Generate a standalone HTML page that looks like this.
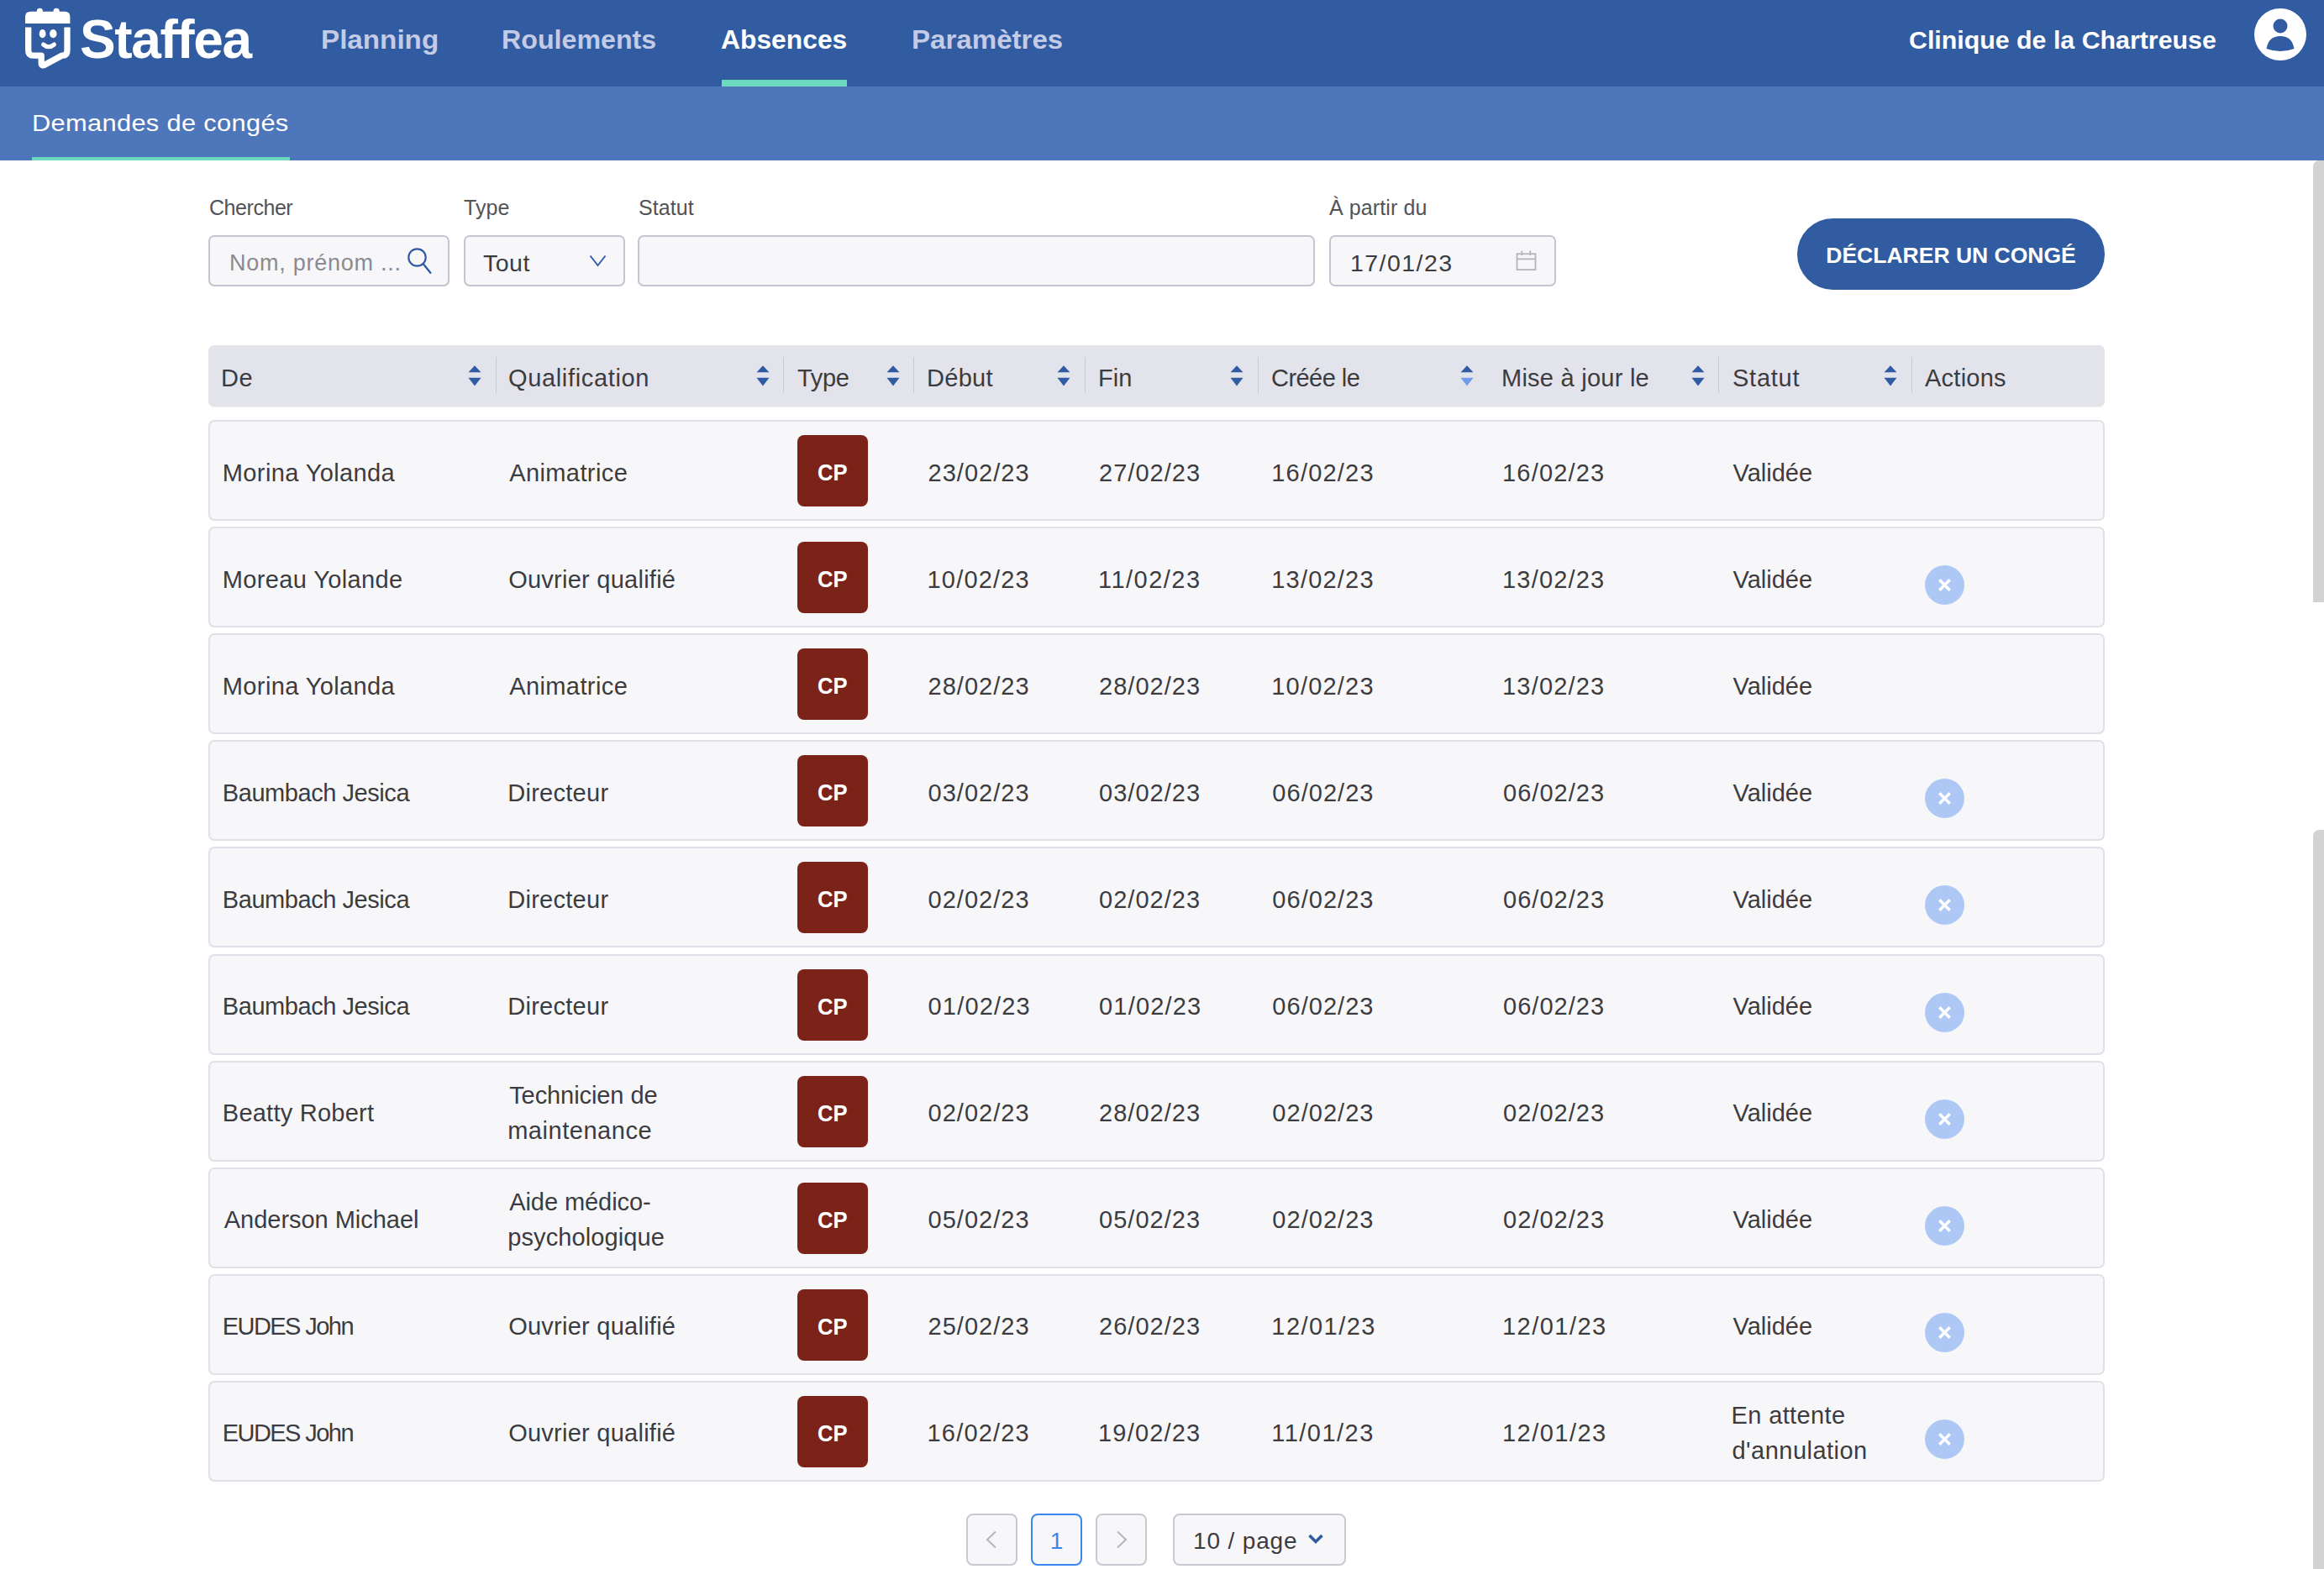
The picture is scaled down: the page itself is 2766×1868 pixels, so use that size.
<!DOCTYPE html>
<html><head><meta charset="utf-8">
<style>
*{box-sizing:border-box;margin:0;padding:0}
html,body{width:2766px;height:1868px;overflow:hidden;background:#fff;font-family:"Liberation Sans",sans-serif;color:#3c3c40}
.abs{position:absolute}
#hdr{position:absolute;left:0;top:0;width:2766px;height:103px;background:#315ca2}
#sub{position:absolute;left:0;top:103px;width:2766px;height:88px;background:#4e77bb}
.nav{position:absolute;top:1px;height:103px;line-height:94px;font-size:31px;font-weight:700;color:#c3cbe6;letter-spacing:1.15px;white-space:nowrap}
.nav.act{color:#fff}
.lbl{position:absolute;font-size:25px;color:#525357;white-space:nowrap;line-height:30px;letter-spacing:0.1px}
.inp{position:absolute;top:280px;height:61px;background:#f7f7fa;border:2px solid #c3c6d0;border-radius:7px}
.th{position:absolute;left:248px;top:411px;width:2257px;height:73px;background:#e2e3eb;border-radius:7px;box-shadow:0 1px 1px rgba(0,0,0,0.06)}
.hl{position:absolute;top:0;height:73px;line-height:73px;font-size:29px;letter-spacing:0.65px;color:#3c3c40;white-space:nowrap;padding-top:3px}
.sort{position:absolute;top:24px;width:16px;height:25px}
.div{position:absolute;top:14px;width:1px;height:43px;background:#c8c9d2}
.row{position:absolute;left:248px;width:2257px;height:120px;background:#f7f7fa;border:2px solid #dfe0e8;border-radius:7px}
.c{position:absolute;top:0;height:116px;display:flex;align-items:center;padding-top:5px;font-size:29px;line-height:42px;letter-spacing:0.3px;white-space:nowrap}
.d{letter-spacing:1.45px}
.cp{position:absolute;left:699px;top:16px;width:84px;height:85px;background:#7b2318;border-radius:8px;color:#fff;font-weight:700;font-size:28.5px;text-align:center;line-height:88px}.cp span{display:inline-block;transform:scaleX(0.9)}
.x{position:absolute;left:2041px;width:47px;height:47px;border-radius:50%;background:#aec8f6}
.pg{position:absolute;top:1802px;height:62px;background:#f7f7fa;border:2px solid #c8c9d1;border-radius:8px}
</style></head><body>
<div id="hdr">
  <svg class="abs" style="left:0;top:0" width="100" height="103" viewBox="0 0 100 103">
        <path d="M30 28 L30 20 Q30 13.7 36.5 13.7 L77 13.7 Q83.4 13.7 83.4 20 L83.4 28 Z" fill="#fff"/>
    <rect x="43.8" y="9.8" width="7.2" height="8" rx="3.6" fill="#fff"/>
    <rect x="63.5" y="9.8" width="7.2" height="8" rx="3.6" fill="#fff"/>
    <path d="M33.7 32.6 L33.7 60 Q33.7 66.2 40 66.2 L49.2 66.2 L49.2 75 Q49.2 79.5 53.5 77 L73.5 66.2 L74.5 66.2 Q80 66.2 80 60 L80 32.6" fill="none" stroke="#fff" stroke-width="7.3" stroke-linejoin="round"/>
    <ellipse cx="50.6" cy="40.2" rx="3.9" ry="5.1" fill="#fff"/>
    <ellipse cx="63.3" cy="40.2" rx="4.2" ry="5.1" fill="#fff"/>
    <path d="M51.5 53 Q58 58.5 64.5 53" fill="none" stroke="#fff" stroke-width="5" stroke-linecap="round"/>
  </svg>
  <div class="abs" style="left:95px;top:1px;height:103px;line-height:92px;font-size:64px;font-weight:700;color:#fff;letter-spacing:-1.4px">Staffea</div>
  <div class="nav" style="left:381.9px;letter-spacing:0;transform:scaleX(1.071);transform-origin:0 0">Planning</div>
  <div class="nav" style="left:597.3px;letter-spacing:0;transform:scaleX(1.038);transform-origin:0 0">Roulements</div>
  <div class="nav act" style="left:857.9px;letter-spacing:0;transform:scaleX(1.026);transform-origin:0 0">Absences</div>
  <div class="abs" style="left:859px;top:95px;width:149px;height:8px;background:#6cdabd"></div>
  <div class="nav" style="left:1084.8px;letter-spacing:0;transform:scaleX(1.067);transform-origin:0 0">Paramètres</div>
  <div class="nav act" style="left:2272px;font-size:29px;letter-spacing:0;transform:scaleX(1.046);transform-origin:0 0">Clinique de la Chartreuse</div>
  <svg class="abs" style="left:2683px;top:10px" width="62" height="62" viewBox="0 0 62 62">
    <circle cx="31" cy="31" r="31" fill="#fff"/>
    <circle cx="31" cy="21" r="8.5" fill="#315ca2"/>
    <path d="M14.5 48 Q17 33 31 33 Q45 33 47.5 48 Q31 54 14.5 48 Z" fill="#315ca2"/>
  </svg>
</div>
<div id="sub">
  <div class="abs" style="left:38px;top:2px;height:84px;line-height:84px;font-size:28px;color:#fff;letter-spacing:0.3px;white-space:nowrap;transform:scaleX(1.1);transform-origin:0 0">Demandes de congés</div>
  <div class="abs" style="left:38px;top:84px;width:307px;height:4px;background:#6cdabd"></div>
</div>
<div class="abs" style="left:2753px;top:191px;width:13px;height:526px;background:#d3d3d3;border-radius:7px 0 0 0"></div>
<div class="abs" style="left:2753px;top:988px;width:13px;height:880px;background:#d3d3d3;border-radius:7px 0 0 0"></div>

<!-- filters -->
<div class="lbl" style="left:249px;top:232px;letter-spacing:-0.45px">Chercher</div>
<div class="lbl" style="left:552px;top:232px">Type</div>
<div class="lbl" style="left:760px;top:232px">Statut</div>
<div class="lbl" style="left:1582px;top:232px">À partir du</div>

<div class="inp" style="left:248px;width:287px"></div>
<div class="abs" style="left:273px;top:295px;line-height:36px;font-size:27px;color:#8a8a90;letter-spacing:0.75px;white-space:nowrap">Nom, prénom ...</div>
<svg class="abs" style="left:480px;top:290px" width="40" height="40" viewBox="0 0 40 40">
  <circle cx="16.5" cy="16.5" r="10.2" fill="none" stroke="#2f5ba3" stroke-width="2.2"/>
  <path d="M23.8 24.2 L32.3 34.8" stroke="#2f5ba3" stroke-width="2.3" stroke-linecap="round"/>
</svg>
<div class="inp" style="left:552px;width:192px"></div>
<div class="abs" style="left:575px;top:295px;line-height:36px;font-size:28.5px;color:#3c3c40;letter-spacing:0.5px">Tout</div>
<svg class="abs" style="left:700px;top:300px" width="24" height="20" viewBox="0 0 24 20">
  <path d="M2.5 4.5 L11.5 16 L20.5 4.5" fill="none" stroke="#2f5ba3" stroke-width="1.9"/>
</svg>
<div class="inp" style="left:759px;width:806px"></div>
<div class="inp" style="left:1582px;width:270px"></div>
<div class="abs d" style="left:1607px;top:295px;line-height:36px;font-size:28.5px;color:#3c3c40">17/01/23</div>
<svg class="abs" style="left:1803px;top:297px" width="27" height="27" viewBox="0 0 27 27">
  <rect x="2.5" y="5.3" width="22" height="18.8" fill="none" stroke="#b4b4bc" stroke-width="1.8"/>
  <path d="M2.5 11.3 H24.5 M8.3 1.5 V7 M18.3 1.5 V7" stroke="#b4b4bc" stroke-width="1.8"/>
</svg>
<div class="abs" style="left:2139px;top:260px;width:366px;height:85px;border-radius:43px;background:#315ca2;color:#fff;font-weight:700;font-size:26.5px;line-height:85px;text-align:center;white-space:nowrap;padding-top:2px">DÉCLARER UN CONGÉ</div>

<!-- table header -->
<div class="th">
  <div class="hl" style="left:15px">De</div>
  <div class="hl" style="left:357px">Qualification</div>
  <div class="hl" style="left:701px;letter-spacing:-0.3px">Type</div>
  <div class="hl" style="left:855px;letter-spacing:0.3px">Début</div>
  <div class="hl" style="left:1059px;letter-spacing:0px">Fin</div>
  <div class="hl" style="left:1265px;letter-spacing:-0.55px">Créée le</div>
  <div class="hl" style="left:1539px;letter-spacing:0.25px">Mise à jour le</div>
  <div class="hl" style="left:1814px;letter-spacing:0.75px">Statut</div>
  <div class="hl" style="left:2043px;letter-spacing:0.25px">Actions</div>
  <div class="div" style="left:342px"></div>
  <div class="div" style="left:684px"></div>
  <div class="div" style="left:839px"></div>
  <div class="div" style="left:1043px"></div>
  <div class="div" style="left:1249px"></div>
  <div class="div" style="left:1797px"></div>
  <div class="div" style="left:2027px"></div>
  <!--SORTS-->
<svg class="sort" style="left:308.8px" width="16" height="25" viewBox="0 0 16 25"><path d="M0.5 8.3 L15.5 8.3 L8 0.3 Z" fill="#2f5ba3"/><path d="M0.5 14.7 L15.5 14.7 L8 24.5 Z" fill="#2f5ba3"/></svg>
<svg class="sort" style="left:652px" width="16" height="25" viewBox="0 0 16 25"><path d="M0.5 8.3 L15.5 8.3 L8 0.3 Z" fill="#2f5ba3"/><path d="M0.5 14.7 L15.5 14.7 L8 24.5 Z" fill="#2f5ba3"/></svg>
<svg class="sort" style="left:806.7px" width="16" height="25" viewBox="0 0 16 25"><path d="M0.5 8.3 L15.5 8.3 L8 0.3 Z" fill="#2f5ba3"/><path d="M0.5 14.7 L15.5 14.7 L8 24.5 Z" fill="#2f5ba3"/></svg>
<svg class="sort" style="left:1010px" width="16" height="25" viewBox="0 0 16 25"><path d="M0.5 8.3 L15.5 8.3 L8 0.3 Z" fill="#2f5ba3"/><path d="M0.5 14.7 L15.5 14.7 L8 24.5 Z" fill="#2f5ba3"/></svg>
<svg class="sort" style="left:1216px" width="16" height="25" viewBox="0 0 16 25"><path d="M0.5 8.3 L15.5 8.3 L8 0.3 Z" fill="#2f5ba3"/><path d="M0.5 14.7 L15.5 14.7 L8 24.5 Z" fill="#2f5ba3"/></svg>
<svg class="sort" style="left:1489.5px" width="16" height="25" viewBox="0 0 16 25"><path d="M0.5 8.3 L15.5 8.3 L8 0.3 Z" fill="#2f5ba3"/><path d="M0.5 14.7 L15.5 14.7 L8 24.5 Z" fill="#6f9be8"/></svg>
<svg class="sort" style="left:1764.5px" width="16" height="25" viewBox="0 0 16 25"><path d="M0.5 8.3 L15.5 8.3 L8 0.3 Z" fill="#2f5ba3"/><path d="M0.5 14.7 L15.5 14.7 L8 24.5 Z" fill="#2f5ba3"/></svg>
<svg class="sort" style="left:1994px" width="16" height="25" viewBox="0 0 16 25"><path d="M0.5 8.3 L15.5 8.3 L8 0.3 Z" fill="#2f5ba3"/><path d="M0.5 14.7 L15.5 14.7 L8 24.5 Z" fill="#2f5ba3"/></svg>
<!--/SORTS-->
</div>

<!--<!--<!--ROWS-->
<div class="row" style="top:500.0px"><div class="c" style="left:14.8px"><div><span style="letter-spacing:0.38px;margin-left:0.0px">Morina Yolanda</span></div></div><div class="c" style="left:356.2px"><div><span style="letter-spacing:0.40px;margin-left:0.0px">Animatrice</span></div></div><div class="cp"><span>CP</span></div><div class="c" style="left:854.5px"><div><span style="letter-spacing:1.04px;margin-left:0.0px">23/02/23</span></div></div><div class="c" style="left:1058.0px"><div><span style="letter-spacing:1.04px;margin-left:0.0px">27/02/23</span></div></div><div class="c" style="left:1263.3px"><div><span style="letter-spacing:1.19px;margin-left:0.0px">16/02/23</span></div></div><div class="c" style="left:1538.0px"><div><span style="letter-spacing:1.19px;margin-left:0.0px">16/02/23</span></div></div><div class="c" style="left:1812.5px"><div><span style="letter-spacing:0.00px;margin-left:0.0px">Validée</span></div></div></div>
<div class="row" style="top:627.1px"><div class="c" style="left:14.8px"><div><span style="letter-spacing:0.36px;margin-left:0.0px">Moreau Yolande</span></div></div><div class="c" style="left:355.2px"><div><span style="letter-spacing:0.25px;margin-left:0.0px">Ouvrier qualifié</span></div></div><div class="cp"><span>CP</span></div><div class="c" style="left:853.5px"><div><span style="letter-spacing:1.19px;margin-left:0.0px">10/02/23</span></div></div><div class="c" style="left:1057.0px"><div><span style="letter-spacing:1.47px;margin-left:0.0px">11/02/23</span></div></div><div class="c" style="left:1263.3px"><div><span style="letter-spacing:1.19px;margin-left:0.0px">13/02/23</span></div></div><div class="c" style="left:1538.0px"><div><span style="letter-spacing:1.19px;margin-left:0.0px">13/02/23</span></div></div><div class="c" style="left:1812.5px"><div><span style="letter-spacing:0.00px;margin-left:0.0px">Validée</span></div></div><div class="x" style="top:44px"><svg width="47" height="47" viewBox="0 0 47 47"><path d="M17.3 17.3 L29.7 29.7 M29.7 17.3 L17.3 29.7" stroke="#fff" stroke-width="3.5"/></svg></div></div>
<div class="row" style="top:754.2px"><div class="c" style="left:14.8px"><div><span style="letter-spacing:0.38px;margin-left:0.0px">Morina Yolanda</span></div></div><div class="c" style="left:356.2px"><div><span style="letter-spacing:0.40px;margin-left:0.0px">Animatrice</span></div></div><div class="cp"><span>CP</span></div><div class="c" style="left:854.5px"><div><span style="letter-spacing:1.04px;margin-left:0.0px">28/02/23</span></div></div><div class="c" style="left:1058.0px"><div><span style="letter-spacing:1.04px;margin-left:0.0px">28/02/23</span></div></div><div class="c" style="left:1263.3px"><div><span style="letter-spacing:1.19px;margin-left:0.0px">10/02/23</span></div></div><div class="c" style="left:1538.0px"><div><span style="letter-spacing:1.19px;margin-left:0.0px">13/02/23</span></div></div><div class="c" style="left:1812.5px"><div><span style="letter-spacing:0.00px;margin-left:0.0px">Validée</span></div></div></div>
<div class="row" style="top:881.3px"><div class="c" style="left:14.8px"><div><span style="letter-spacing:-0.44px;margin-left:0.0px">Baumbach Jesica</span></div></div><div class="c" style="left:354.2px"><div><span style="letter-spacing:0.28px;margin-left:0.0px">Directeur</span></div></div><div class="cp"><span>CP</span></div><div class="c" style="left:854.5px"><div><span style="letter-spacing:1.04px;margin-left:0.0px">03/02/23</span></div></div><div class="c" style="left:1058.0px"><div><span style="letter-spacing:1.04px;margin-left:0.0px">03/02/23</span></div></div><div class="c" style="left:1264.3px"><div><span style="letter-spacing:1.04px;margin-left:0.0px">06/02/23</span></div></div><div class="c" style="left:1539.0px"><div><span style="letter-spacing:1.04px;margin-left:0.0px">06/02/23</span></div></div><div class="c" style="left:1812.5px"><div><span style="letter-spacing:0.00px;margin-left:0.0px">Validée</span></div></div><div class="x" style="top:44px"><svg width="47" height="47" viewBox="0 0 47 47"><path d="M17.3 17.3 L29.7 29.7 M29.7 17.3 L17.3 29.7" stroke="#fff" stroke-width="3.5"/></svg></div></div>
<div class="row" style="top:1008.4px"><div class="c" style="left:14.8px"><div><span style="letter-spacing:-0.44px;margin-left:0.0px">Baumbach Jesica</span></div></div><div class="c" style="left:354.2px"><div><span style="letter-spacing:0.28px;margin-left:0.0px">Directeur</span></div></div><div class="cp"><span>CP</span></div><div class="c" style="left:854.5px"><div><span style="letter-spacing:1.04px;margin-left:0.0px">02/02/23</span></div></div><div class="c" style="left:1058.0px"><div><span style="letter-spacing:1.04px;margin-left:0.0px">02/02/23</span></div></div><div class="c" style="left:1264.3px"><div><span style="letter-spacing:1.04px;margin-left:0.0px">06/02/23</span></div></div><div class="c" style="left:1539.0px"><div><span style="letter-spacing:1.04px;margin-left:0.0px">06/02/23</span></div></div><div class="c" style="left:1812.5px"><div><span style="letter-spacing:0.00px;margin-left:0.0px">Validée</span></div></div><div class="x" style="top:44px"><svg width="47" height="47" viewBox="0 0 47 47"><path d="M17.3 17.3 L29.7 29.7 M29.7 17.3 L17.3 29.7" stroke="#fff" stroke-width="3.5"/></svg></div></div>
<div class="row" style="top:1135.5px"><div class="c" style="left:14.8px"><div><span style="letter-spacing:-0.44px;margin-left:0.0px">Baumbach Jesica</span></div></div><div class="c" style="left:354.2px"><div><span style="letter-spacing:0.28px;margin-left:0.0px">Directeur</span></div></div><div class="cp"><span>CP</span></div><div class="c" style="left:854.5px"><div><span style="letter-spacing:1.19px;margin-left:0.0px">01/02/23</span></div></div><div class="c" style="left:1058.0px"><div><span style="letter-spacing:1.19px;margin-left:0.0px">01/02/23</span></div></div><div class="c" style="left:1264.3px"><div><span style="letter-spacing:1.04px;margin-left:0.0px">06/02/23</span></div></div><div class="c" style="left:1539.0px"><div><span style="letter-spacing:1.04px;margin-left:0.0px">06/02/23</span></div></div><div class="c" style="left:1812.5px"><div><span style="letter-spacing:0.00px;margin-left:0.0px">Validée</span></div></div><div class="x" style="top:44px"><svg width="47" height="47" viewBox="0 0 47 47"><path d="M17.3 17.3 L29.7 29.7 M29.7 17.3 L17.3 29.7" stroke="#fff" stroke-width="3.5"/></svg></div></div>
<div class="row" style="top:1262.6px"><div class="c" style="left:14.8px"><div><span style="letter-spacing:0.24px;margin-left:0.0px">Beatty Robert</span></div></div><div class="c" style="left:356.2px"><div><span style="letter-spacing:-0.08px;margin-left:0.0px">Technicien de</span><br><span style="letter-spacing:0.53px;margin-left:-2.0px">maintenance</span></div></div><div class="cp"><span>CP</span></div><div class="c" style="left:854.5px"><div><span style="letter-spacing:1.04px;margin-left:0.0px">02/02/23</span></div></div><div class="c" style="left:1058.0px"><div><span style="letter-spacing:1.04px;margin-left:0.0px">28/02/23</span></div></div><div class="c" style="left:1264.3px"><div><span style="letter-spacing:1.04px;margin-left:0.0px">02/02/23</span></div></div><div class="c" style="left:1539.0px"><div><span style="letter-spacing:1.04px;margin-left:0.0px">02/02/23</span></div></div><div class="c" style="left:1812.5px"><div><span style="letter-spacing:0.00px;margin-left:0.0px">Validée</span></div></div><div class="x" style="top:44px"><svg width="47" height="47" viewBox="0 0 47 47"><path d="M17.3 17.3 L29.7 29.7 M29.7 17.3 L17.3 29.7" stroke="#fff" stroke-width="3.5"/></svg></div></div>
<div class="row" style="top:1389.7px"><div class="c" style="left:16.8px"><div><span style="letter-spacing:-0.03px;margin-left:0.0px">Anderson Michael</span></div></div><div class="c" style="left:356.2px"><div><span style="letter-spacing:-0.07px;margin-left:0.0px">Aide médico-</span><br><span style="letter-spacing:0.11px;margin-left:-2.0px">psychologique</span></div></div><div class="cp"><span>CP</span></div><div class="c" style="left:854.5px"><div><span style="letter-spacing:1.04px;margin-left:0.0px">05/02/23</span></div></div><div class="c" style="left:1058.0px"><div><span style="letter-spacing:1.04px;margin-left:0.0px">05/02/23</span></div></div><div class="c" style="left:1264.3px"><div><span style="letter-spacing:1.04px;margin-left:0.0px">02/02/23</span></div></div><div class="c" style="left:1539.0px"><div><span style="letter-spacing:1.04px;margin-left:0.0px">02/02/23</span></div></div><div class="c" style="left:1812.5px"><div><span style="letter-spacing:0.00px;margin-left:0.0px">Validée</span></div></div><div class="x" style="top:44px"><svg width="47" height="47" viewBox="0 0 47 47"><path d="M17.3 17.3 L29.7 29.7 M29.7 17.3 L17.3 29.7" stroke="#fff" stroke-width="3.5"/></svg></div></div>
<div class="row" style="top:1516.8px"><div class="c" style="left:14.8px"><div><span style="letter-spacing:-1.57px;margin-left:0.0px">EUDES John</span></div></div><div class="c" style="left:355.2px"><div><span style="letter-spacing:0.25px;margin-left:0.0px">Ouvrier qualifié</span></div></div><div class="cp"><span>CP</span></div><div class="c" style="left:854.5px"><div><span style="letter-spacing:1.04px;margin-left:0.0px">25/02/23</span></div></div><div class="c" style="left:1058.0px"><div><span style="letter-spacing:1.04px;margin-left:0.0px">26/02/23</span></div></div><div class="c" style="left:1263.3px"><div><span style="letter-spacing:1.47px;margin-left:0.0px">12/01/23</span></div></div><div class="c" style="left:1538.0px"><div><span style="letter-spacing:1.47px;margin-left:0.0px">12/01/23</span></div></div><div class="c" style="left:1812.5px"><div><span style="letter-spacing:0.00px;margin-left:0.0px">Validée</span></div></div><div class="x" style="top:44px"><svg width="47" height="47" viewBox="0 0 47 47"><path d="M17.3 17.3 L29.7 29.7 M29.7 17.3 L17.3 29.7" stroke="#fff" stroke-width="3.5"/></svg></div></div>
<div class="row" style="top:1643.9px"><div class="c" style="left:14.8px"><div><span style="letter-spacing:-1.57px;margin-left:0.0px">EUDES John</span></div></div><div class="c" style="left:355.2px"><div><span style="letter-spacing:0.25px;margin-left:0.0px">Ouvrier qualifié</span></div></div><div class="cp"><span>CP</span></div><div class="c" style="left:853.5px"><div><span style="letter-spacing:1.19px;margin-left:0.0px">16/02/23</span></div></div><div class="c" style="left:1057.0px"><div><span style="letter-spacing:1.19px;margin-left:0.0px">19/02/23</span></div></div><div class="c" style="left:1263.3px"><div><span style="letter-spacing:1.47px;margin-left:0.0px">11/01/23</span></div></div><div class="c" style="left:1538.0px"><div><span style="letter-spacing:1.47px;margin-left:0.0px">12/01/23</span></div></div><div class="c" style="left:1810.5px"><div><span style="letter-spacing:0.37px;margin-left:0.0px">En attente</span><br><span style="letter-spacing:0.47px;margin-left:1.0px">d'annulation</span></div></div><div class="x" style="top:44px"><svg width="47" height="47" viewBox="0 0 47 47"><path d="M17.3 17.3 L29.7 29.7 M29.7 17.3 L17.3 29.7" stroke="#fff" stroke-width="3.5"/></svg></div></div>
<!--/ROWS-->-->-->

<!-- pagination -->
<div class="pg" style="left:1150px;width:61px"></div>
<svg class="abs" style="left:1168px;top:1820px" width="24" height="26" viewBox="0 0 24 26">
  <path d="M17 3.5 L7 13 L17 22.5" fill="none" stroke="#b4b5bd" stroke-width="2"/>
</svg>
<div class="pg" style="left:1227px;width:61px;border-color:#3a86f0"></div>
<div class="abs" style="left:1227px;top:1802px;width:61px;height:62px;line-height:66px;text-align:center;font-size:28px;color:#3a86f0">1</div>
<div class="pg" style="left:1304px;width:61px"></div>
<svg class="abs" style="left:1323px;top:1820px" width="24" height="26" viewBox="0 0 24 26">
  <path d="M7 3.5 L17 13 L7 22.5" fill="none" stroke="#b4b5bd" stroke-width="2"/>
</svg>
<div class="pg" style="left:1396px;width:206px"></div>
<div class="abs" style="left:1420px;top:1817px;line-height:36px;font-size:28px;color:#3c3c40;letter-spacing:0.85px;white-space:nowrap">10 / page</div>
<svg class="abs" style="left:1554px;top:1822px" width="24" height="20" viewBox="0 0 24 20">
  <path d="M4.5 6 L12 13.5 L19.5 6" fill="none" stroke="#2f5ba3" stroke-width="3.6"/>
</svg>
</body></html>
